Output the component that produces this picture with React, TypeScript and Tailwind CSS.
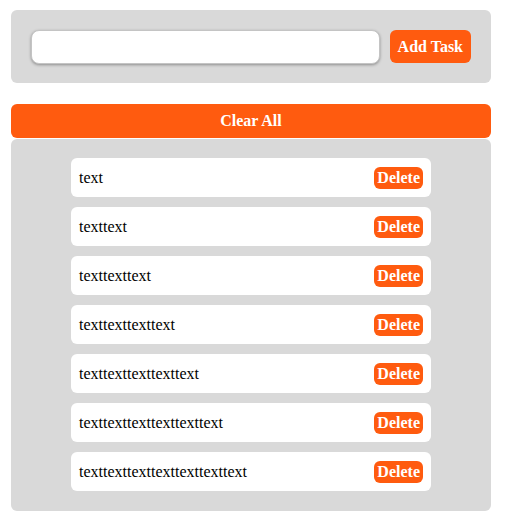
const TASKS = [1, 2, 3, 4, 5, 6, 7].map((n) => "text".repeat(n));

export default function App() {
  return (
    <div className="min-h-screen bg-white pl-[11px] pt-[10px]" style={{ fontFamily: '"Liberation Serif", "Times New Roman", serif' }}>
      <div className="w-[480px]">
        {/* input panel */}
        <div className="flex items-center gap-[10px] rounded-md bg-[#d9d9d9] px-5 py-5 h-[73px]">
          <input
            type="text"
            className="h-[34px] flex-1 rounded-lg border border-[#c4c4c4] bg-white px-2 shadow-[0_1px_3px_rgba(0,0,0,0.35)] outline-none"
          />
          <button className="h-[33px] rounded-md bg-[#ff5b0f] px-2 text-base font-bold text-white">
            Add Task
          </button>
        </div>

        <button className="mt-[21px] block h-[34px] w-full rounded-md bg-[#ff5b0f] text-base font-bold text-white">
          Clear All
        </button>

        {/* list */}
        <div className="mt-px flex flex-col items-center gap-[10px] rounded-md bg-[#d9d9d9] px-5 pt-[19px] pb-5">
          {TASKS.map((t, i) => (
            <div key={i} className="flex h-[39px] w-[360px] items-center justify-between rounded-md bg-white px-2">
              <span className="text-base text-black">{t}</span>
              <button className="h-[22px] rounded-md bg-[#ff5b0f] px-[3px] text-base font-bold leading-none text-white">
                Delete
              </button>
            </div>
          ))}
        </div>
      </div>
    </div>
  );
}
